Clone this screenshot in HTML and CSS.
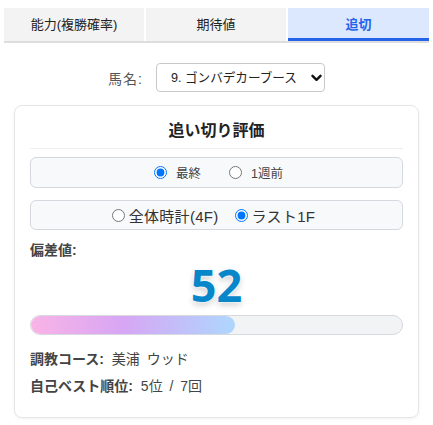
FILE: index.html
```html
<!DOCTYPE html>
<html lang="ja">
<head>
<meta charset="utf-8">
<link rel="stylesheet" href="styles.css">
</head>
<body>
<div class="tabs">
  <div class="tab">能力(複勝確率)</div>
  <div class="tab">期待値</div>
  <div class="tab active">追切</div>
</div>

<div class="horse-row">
  <label class="horse-label" for="horse">馬名:</label>
  <div class="select-wrap">
    <select id="horse" class="horse-select">
      <option>9. ゴンバデカーブース</option>
    </select>
    <svg class="chevron" width="11" height="8" viewBox="0 0 11 8" aria-hidden="true">
      <path d="M1.5 1.8 L5.5 5.8 L9.5 1.8" fill="none" stroke="#111" stroke-width="2.4" stroke-linecap="round" stroke-linejoin="round"/>
    </svg>
  </div>
</div>

<div class="card">
  <div class="card-title">追い切り評価</div>

  <div class="radio-box radio-box-a">
    <label class="opt"><input type="radio" name="when" checked><span>最終</span></label>
    <label class="opt"><input type="radio" name="when"><span>1週前</span></label>
  </div>

  <div class="radio-box radio-box-b">
    <label class="opt"><input type="radio" name="kind"><span>全体時計(4F)</span></label>
    <label class="opt"><input type="radio" name="kind" checked><span>ラスト1F</span></label>
  </div>

  <div class="dev-label">偏差値:</div>
  <div class="dev-value">52</div>

  <div class="bar"><div class="bar-fill" style="width:55%"></div></div>

  <div class="info"><b>調教コース:</b> <span class="val">美浦 ウッド</span></div>
  <div class="info"><b>自己ベスト順位:</b> <span class="val">5位 / 7回</span></div>
</div>
</body>
</html>
```

FILE: styles.css
```css
* { box-sizing: border-box; }

body {
  margin: 0;
  font-family: "Liberation Sans", "Noto Sans CJK JP", sans-serif;
  color: #222;
  background: #fff;
}

.tabs {
  display: grid;
  grid-template-columns: 140px 140px 1fr;
  gap: 2px;
  margin: 8px 4px 0;
  border-bottom: 2px solid #dddddd;
}

.tab {
  height: 33px;
  display: flex;
  align-items: center;
  justify-content: center;
  font-size: 13px;
  color: #222;
  background: #f3f3f3;
  border-bottom: 3px solid transparent;
}

.tab.active {
  background: #dbe8fd;
  color: #2563eb;
  font-weight: bold;
  border-bottom-color: #2563eb;
}

.horse-row {
  display: flex;
  justify-content: center;
  align-items: center;
  gap: 13px;
  margin-top: 20px;
}

.horse-label {
  font-size: 14px;
  color: #555;
  letter-spacing: 1px;
}

.select-wrap {
  position: relative;
  width: 169px;
  height: 29px;
}

.horse-select {
  appearance: none;
  -webkit-appearance: none;
  width: 100%;
  height: 100%;
  border: 1px solid #c9c9c9;
  border-radius: 4px;
  background: #fff;
  padding: 0 16px 0 14px;
  font-family: "Liberation Sans", "Noto Sans CJK JP", sans-serif;
  font-size: 12.6px;
  color: #222;
}

.chevron {
  position: absolute;
  right: 3px;
  top: 11px;
  pointer-events: none;
}

.card {
  margin: 13px 14px 8px;
  border: 1px solid #e4e6ea;
  border-radius: 8px;
  box-shadow: 0 1px 3px rgba(0, 0, 0, 0.06);
  padding: 13px 15px 21px;
}

.card-title {
  text-align: center;
  font-size: 16px;
  font-weight: bold;
  line-height: 24px;
  color: #222;
  padding-bottom: 5px;
  border-bottom: 1px solid #eeeeee;
}

.radio-box {
  display: flex;
  justify-content: center;
  align-items: center;
  background: #f8f9fb;
  border: 1px solid #d5d8de;
  border-radius: 6px;
}

.radio-box-a {
  margin-top: 8px;
  height: 31px;
  gap: 28px;
  font-size: 12.5px;
  color: #444;
  padding-left: 4px;
}

.radio-box-a .opt { gap: 9px; }

.radio-box-b {
  margin-top: 12px;
  height: 30px;
  gap: 16px;
  font-size: 15px;
  color: #333;
  padding-right: 6px;
}

.radio-box-b .opt { gap: 4px; }

.opt {
  display: flex;
  align-items: center;
}

.opt input {
  margin: 0;
  width: 13px;
  height: 13px;
}

.radio-box-b .opt span { letter-spacing: 0.3px; }

.dev-label {
  margin-top: 12px;
  font-size: 14px;
  line-height: 16px;
  font-weight: bold;
  color: #444;
}

.dev-value {
  margin-top: 5px;
  text-align: center;
  font-family: "Noto Sans", "Open Sans", sans-serif;
  font-size: 45px;
  font-weight: bold;
  line-height: 44px;
  color: #0786c9;
  text-shadow: 0 0 2px #fff, 0 0 2px #fff, 0 3px 6px rgba(0, 0, 0, 0.2);
}

.bar {
  margin-top: 8px;
  height: 20px;
  border: 1px solid #d6d9de;
  border-radius: 10px;
  background: #f1f3f5;
  overflow: hidden;
}

.bar-fill {
  height: 100%;
  border-radius: 10px;
  background: linear-gradient(to right, #f9b4e6 0%, #d7a6f4 45%, #aed7fd 100%);
}

.info {
  font-size: 14px;
  line-height: 20px;
  color: #444;
  margin-top: 7px;
}

.bar + .info { margin-top: 14px; }

.info b { font-weight: bold; margin-right: 4px; }

.info .val { word-spacing: 3px; }
```
